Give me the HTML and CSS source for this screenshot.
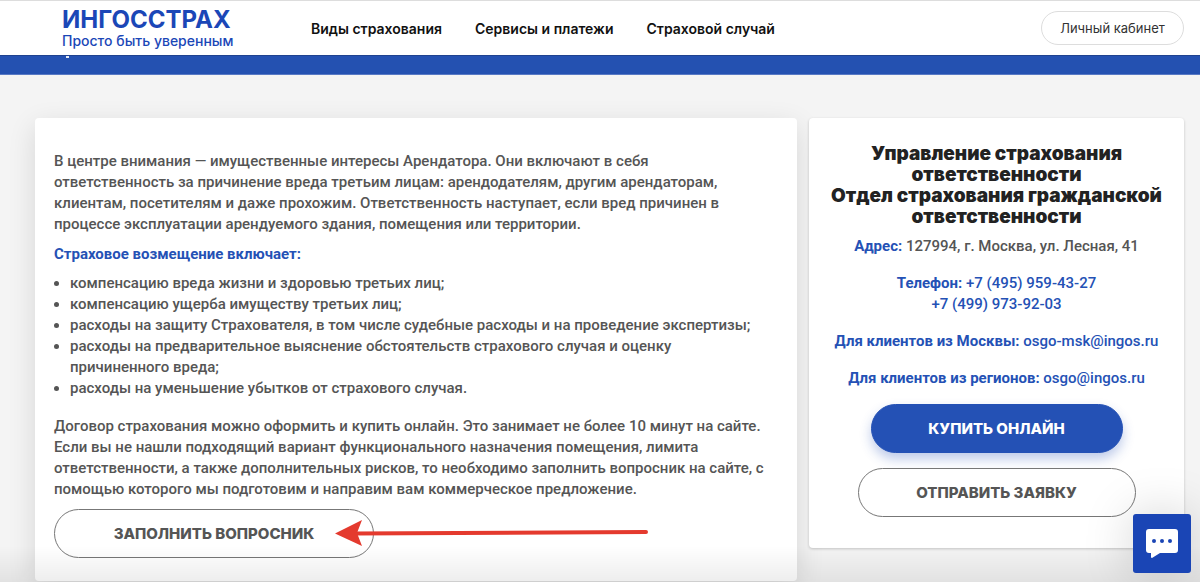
FILE: index.html
```html
<!DOCTYPE html>
<html lang="ru">
<head>
<meta charset="utf-8">
<meta name="viewport" content="width=device-width, initial-scale=1">
<title>Ингосстрах</title>
<link rel="stylesheet" href="styles.css">
</head>
<body>
<header class="header">
  <a class="brand" href="#"><span class="brand-name">ИНГОССТРАХ</span><span class="brand-slogan">Просто быть уверенным</span></a>
  <nav class="nav">
    <a href="#">Виды страхования</a>
    <a href="#">Сервисы и платежи</a>
    <a href="#">Страховой случай</a>
  </nav>
  <button class="account" type="button">Личный кабинет</button>
</header>
<div class="band"></div>
<main class="page">
  <section class="card article">
    <p>В центре внимания — имущественные интересы Арендатора. Они включают в себя<br>ответственность за причинение вреда третьим лицам: арендодателям, другим арендаторам,<br>клиентам, посетителям и даже прохожим. Ответственность наступает, если вред причинен в<br>процессе эксплуатации арендуемого здания, помещения или территории.</p>
    <h2 class="subtitle">Страховое возмещение включает:</h2>
    <ul class="list">
      <li>компенсацию вреда жизни и здоровью третьих лиц;</li>
      <li>компенсацию ущерба имуществу третьих лиц;</li>
      <li>расходы на защиту Страхователя, в том числе судебные расходы и на проведение экспертизы;</li>
      <li>расходы на предварительное выяснение обстоятельств страхового случая и оценку<br>причиненного вреда;</li>
      <li>расходы на уменьшение убытков от страхового случая.</li>
    </ul>
    <p>Договор страхования можно оформить и купить онлайн. Это занимает не более 10 минут на сайте.<br>Если вы не нашли подходящий вариант функционального назначения помещения, лимита<br>ответственности, а также дополнительных рисков, то необходимо заполнить вопросник на сайте, с<br>помощью которого мы подготовим и направим вам коммерческое предложение.</p>
    <div class="form-link">
      <button class="pill pill-form" type="button">ЗАПОЛНИТЬ ВОПРОСНИК</button>
      <svg class="arrow" viewBox="0 0 314 28" width="314" height="28" aria-hidden="true">
        <path d="M20 14.500 L311 13" stroke="#e43a2e" stroke-width="4" stroke-linecap="round"/>
        <path d="M0 14.500 L27 1 L22 14 L27 27 Z" fill="#e43a2e"/>
      </svg>
    </div>
  </section>
  <aside class="card contacts">
    <h1 class="title">Управление страхования<br>ответственности<br>Отдел страхования гражданской<br>ответственности</h1>
    <p class="address"><b>Адрес:</b> 127994, г. Москва, ул. Лесная, 41</p>
    <p class="contact"><b>Телефон:</b> <a href="tel:+74959594327">+7 (495) 959-43-27</a><br><a href="tel:+74999739203">+7 (499) 973-92-03</a></p>
    <p class="contact"><b>Для клиентов из Москвы:</b> <a href="mailto:osgo-msk@ingos.ru">osgo-msk@ingos.ru</a></p>
    <p class="contact"><b>Для клиентов из регионов:</b> <a href="mailto:osgo@ingos.ru">osgo@ingos.ru</a></p>
    <div class="actions">
      <button class="pill pill-buy" type="button">КУПИТЬ ОНЛАЙН</button>
      <button class="pill pill-send" type="button">ОТПРАВИТЬ ЗАЯВКУ</button>
    </div>
  </aside>
</main>
<div class="fade"></div>
<button class="chat" type="button" aria-label="Чат">
  <svg viewBox="0 0 32 30" width="32" height="30" aria-hidden="true">
    <path d="M3 0H29Q32 0 32 3V21Q32 24 29 24H14L6 29Q5 29 5 28V24H3Q0 24 0 21V3Q0 0 3 0Z" fill="#fff"/>
    <circle cx="8" cy="12" r="2" fill="#1a45b5"/><circle cx="16" cy="12" r="2" fill="#1a45b5"/><circle cx="24" cy="12" r="2" fill="#1a45b5"/>
  </svg>
</button>
</body>
</html>
```
FILE: styles.css
```css
* { box-sizing: border-box; }
body { margin: 0; background: #f4f4f4; color: #555; font: 500 15px/21px Roboto, "Open Sans", sans-serif; overflow: hidden; }
h1, h2, p, ul { margin: 0; padding: 0; }
a { color: inherit; text-decoration: none; }
button { font: inherit; padding: 0; cursor: pointer; }
.header { display: flex; align-items: center; height: 55px; padding: 0 16px 0 62px; border-top: 1px solid #ddd; background: #fff; }
.brand { display: flex; flex-direction: column; width: 249px; padding-top: 1px; color: #1b47b7; }
.brand-name { font: 700 24px/24px Inter, sans-serif; }
.brand-slogan { font: 500 14px/18px Inter, sans-serif; }
.nav { display: flex; flex: 1; gap: 33px; padding-top: 1px; color: #111; font: 600 14px/20px Inter, sans-serif; }
.account { width: 143px; height: 34px; border: 1px solid #ddd; border-radius: 17px; background: #fff; color: #333; font: 400 13px/20px Inter, sans-serif; }
.band { height: 20px; padding-left: 66px; border-top: 1px solid #1f428f; border-bottom: 1px solid #5879c4; background: #2451b1; }
.band::before { content: ""; display: block; width: 3px; height: 2px; background: #e8edf7; }
.page { display: grid; grid-template-columns: minmax(0, 762fr) minmax(0, 375fr); gap: 12px; align-items: start; padding: 43px 16px 1px 35px; }
.card { border-radius: 4px; background: #fff; }
.article { min-width: 0; padding: 33px 19px 23px; box-shadow: 0 8px 28px rgba(0, 0, 0, .12); white-space: nowrap; }
.subtitle { margin: 9px 0 8px; color: #2451b5; font: 700 15px/21px Roboto, sans-serif; }
.list { margin-bottom: 17px; padding-left: 16px; }
.form-link { position: relative; margin-top: 9px; }
.arrow { position: absolute; left: 281px; top: 10px; fill: none; }
.pill { height: 49px; border: 1px solid #777; border-radius: 25px; background: #fff; color: #555; font: 800 15px/20px Inter, sans-serif; }
.pill-form { display: block; width: 320px; }
.contacts { padding: 25px 16px 31px; text-align: center; box-shadow: 0 1px 3px rgba(0, 0, 0, .2); }
.title { margin-bottom: 9px; color: #222; font: 900 19px/21px Inter, sans-serif; white-space: nowrap; }
.address b, .contact { color: #2451b5; }
.contact { margin-top: 16px; }
.actions { display: flex; flex-direction: column; align-items: center; gap: 15px; margin-top: 15px; }
.pill-buy { width: 252px; border-color: #2451b5; background: #2451b5; color: #fff; box-shadow: 0 6px 12px rgba(36, 81, 181, .3); }
.pill-send { width: 278px; }
.fade { position: fixed; right: 0; bottom: 0; left: 0; height: 36px; background: linear-gradient(transparent, rgba(0, 0, 0, .07)); pointer-events: none; }
.chat { position: fixed; right: 9px; bottom: 9px; display: grid; place-items: center; width: 58px; height: 59px; border: 0; border-radius: 3px; background: #1a45b5; box-shadow: 0 0 50px rgba(0, 0, 0, .18); }
```
